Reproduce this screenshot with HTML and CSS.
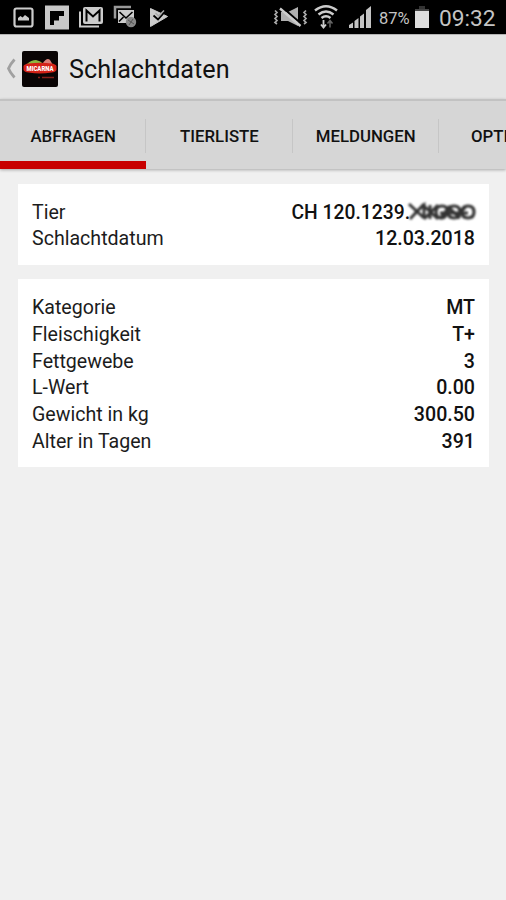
FILE: index.html
```html
<!DOCTYPE html>
<html lang="de">
<head>
    <meta charset="UTF-8">
    <meta name="viewport" content="width=device-width, initial-scale=1.0">
    <title>Schlachtdaten</title>
    <link rel="stylesheet" href="styles.css">
</head>
<body>

<div class="status-bar">
    <svg class="notifications" width="180" height="34" viewBox="0 0 180 34">
        <!-- picture -->
        <rect x="14.5" y="8.5" width="18" height="18" rx="2" fill="none" stroke="#ccc" stroke-width="2.2"/>
        <path d="M18 20.500v-2.500l2.500-2 2 1.500 2.500-2.500 4 3v2.500z" fill="#ccc"/>
        <!-- flipboard -->
        <rect x="45" y="5.500" width="24" height="24" fill="#c8c8c8"/>
        <path d="M50 11h14v5h-5v4.500h-5v4.500h-4z" fill="#000"/>
        <!-- mail -->
        <path d="M80 11.500v15h19" fill="none" stroke="#ccc" stroke-width="2"/>
        <rect x="83" y="7" width="20" height="17" rx="2" fill="#ccc"/>
        <path d="M86.500 21.500v-11l6.500 6 6.500-6v11" fill="none" stroke="#000" stroke-width="2"/>
        <!-- mail blocked -->
        <path d="M115 18.500v-11.500h16" fill="none" stroke="#999" stroke-width="2.500"/>
        <rect x="118" y="10" width="16" height="13" fill="#ccc"/>
        <path d="M119.500 12l6.500 6 6.500-6M119 21.500l4.500-4.500" fill="none" stroke="#000" stroke-width="1.600"/>
        <circle cx="131" cy="22" r="5.200" fill="#888"/>
        <path d="M128 20l6 4M133 19l-4 6" stroke="#555" stroke-width="1"/>
        <!-- play -->
        <path d="M150.500 8.500l17 8-17 10z" fill="#ccc" stroke="#ccc" stroke-linejoin="round"/>
        <path d="M153.500 15.500l4.500 4 8-9" fill="none" stroke="#000" stroke-width="1.800"/>
        <path d="M155.500 13l3 3 5.500-5.500" fill="none" stroke="#aaa" stroke-width="1.500"/>
    </svg>

    <div class="system">
        <svg width="104" height="34" viewBox="272 0 104 34">
            <!-- vibrate / muted -->
            <path d="M276 10.500l2 2-2 2 2 2-2 2 2 2-2 2 2 1.500M307 10.500l-2 2 2 2-2 2 2 2-2 2 2 2-2 1.500" fill="none" stroke="#aaa" stroke-width="1.700"/>
            <path d="M282 12h7l10-5v19l-10-5h-7z" fill="#b0b0b0"/>
            <path d="M283.500 7.500l19 16.500" stroke="#000" stroke-width="2"/>
            <path d="M281 8.500l20.500 17.500" stroke="#ccc" stroke-width="2.400"/>
            <!-- wifi -->
            <path d="M316 10.500q11-8.500 22 0M319.500 14.500q7.500-6 15 0M322.500 18q4.500-3.500 9 0" fill="none" stroke="#ccc" stroke-width="2.500"/>
            <path d="M324.500 20v6M322 24.500l2.500 3 2.500-3" fill="none" stroke="#ccc" stroke-width="1.800"/>
            <path d="M331 27.500v-6M328.500 23.500l2.500-3 2.500 3" fill="none" stroke="#666" stroke-width="1.500"/>
            <!-- signal -->
            <path d="M350 28v-3l4-2.500v5.500zM355.500 28v-7l4-3v10zM361 28v-11.500l4-3v14.500zM367 28v-18l5-4v22z" fill="#c4c4c4"/>
        </svg>
        <span class="percent">87%</span>
        <svg class="battery" width="16" height="34" viewBox="0 0 16 34">
            <path d="M5 6h6v3H5z" fill="#333"/>
            <path d="M1 11V9h14v2" fill="#444"/>
            <rect x="1" y="11" width="14" height="17" fill="#ddd"/>
        </svg>
        <span class="clock">09:32</span>
    </div>
</div>

<header class="action-bar">
    <svg class="back" width="12" height="24" viewBox="0 0 12 24">
        <path d="M10.500 2.500q-4.500 5-6 9 1.500 4 6 9" fill="none" stroke="#a0a0a0" stroke-width="2.800"/>
    </svg>
    <svg class="logo" width="36" height="36" viewBox="0 0 36 36">
        <rect width="36" height="36" rx="2" fill="#0a0505"/>
        <path d="M5 13q4-4 9-4 5 1 7 4z" fill="#8cb840"/>
        <path d="M21 12q4-6 7-3l3 5z" fill="#dc8078"/>
        <path d="M1.500 15q1-2 5-2.500 11.500-1.500 23 0 4 .5 5 2.500v4q-1 2-5 2.500-11.500 2-23 0-4-.5-5-2.500z" fill="#d52318"/>
        <text class="logo-name" x="18" y="20" text-anchor="middle" textLength="27" lengthAdjust="spacingAndGlyphs">MICARNA</text>
        <path d="M16 26.500h2M20 26.500h12" stroke="#84201a" stroke-width="1.500"/>
    </svg>
    <h1>Schlachtdaten</h1>
</header>

<nav class="tabs">
    <a class="tab active">ABFRAGEN</a>
    <a class="tab">TIERLISTE</a>
    <a class="tab">MELDUNGEN</a>
    <a class="tab">OPTIONEN</a>
</nav>

<main class="content">
    <section class="card">
        <div class="row">
            <span>Tier</span>
            <span class="value number">CH 120.1239.<svg class="masked" width="63" height="20" viewBox="0 0 63 20">
                <path d="M-3 1l15 14M12 1L-2 16M3 10l9-8v13M12 3l14 13M26 2L12 16M18 2v14" stroke-width="3"/>
                <path d="M24 9q0-6 6-6t5 6-6 6-5-6M38 3l-10 13M36 9q0-6 6-6t6 6-6 6-6-6M50 9q0-6 6-6t6 6-6 6-6-6M28 10h28M44 15l10-12M36 4l12 11" stroke-width="3.200"/>
            </svg></span>
        </div>
        <div class="row"><span>Schlachtdatum</span><span class="value">12.03.2018</span></div>
    </section>

    <section class="card details">
        <div class="row"><span>Kategorie</span><span class="value">MT</span></div>
        <div class="row"><span>Fleischigkeit</span><span class="value">T+</span></div>
        <div class="row"><span>Fettgewebe</span><span class="value">3</span></div>
        <div class="row"><span>L-Wert</span><span class="value">0.00</span></div>
        <div class="row"><span>Gewicht in kg</span><span class="value">300.50</span></div>
        <div class="row"><span>Alter in Tagen</span><span class="value">391</span></div>
    </section>
</main>

</body>
</html>
```

FILE: styles.css
```css
* {
    box-sizing: border-box;
}

body {
    font-family: Roboto, sans-serif;
    margin: 0;
    min-height: 900px;
    background: #f0f0f0;
    color: #1c1c1c;
    overflow: hidden;
}

svg {
    display: block;
    flex-shrink: 0;
}

.status-bar {
    display: flex;
    justify-content: space-between;
    height: 34px;
    background: #000;
    color: #c4c4c4;
}

.system {
    display: flex;
    align-items: center;
    padding-right: 11px;
}

.percent {
    width: 35px;
    margin-left: 4px;
    font-size: 16.5px;
    padding-top: 3px;
}

.clock {
    width: 56px;
    margin-left: 9px;
    font-size: 22.7px;
    padding-top: 3px;
    white-space: nowrap;
}

.action-bar {
    display: flex;
    align-items: center;
    height: 65px;
    padding: 3px 0 0 4px;
    background: #e4e4e4;
    border-top: 1px solid #b4b4b4;
}

.logo {
    margin-left: 6px;
}

.logo-name {
    font-size: 7.5px;
    font-weight: 900;
    fill: #fff;
}

h1 {
    margin: 0 0 0 11px;
    padding-top: 2px;
    font-size: 25.2px;
    font-weight: 400;
    color: #111;
}

.tabs {
    display: flex;
    height: 70px;
    background: #d6d6d6;
    border-top: 2px solid #c2c2c2;
    box-shadow: 0 1px 3px rgba(0, 0, 0, 0.3);
    overflow-x: clip;
}

.tab {
    display: flex;
    align-items: center;
    justify-content: center;
    flex: 0 0 146.3px;
    padding-top: 2px;
    font-size: 16.8px;
    font-weight: 500;
    color: #111;
    background: linear-gradient(#c6c6c6, #c6c6c6) right 18px / 1px 34px no-repeat;
}

.active {
    padding-top: 10px;
    border-bottom: 8px solid #c80000;
}

.content {
    display: flex;
    flex-direction: column;
    gap: 14px;
    padding: 15px 17px 0 18px;
}

.card {
    padding: 14.5px 14px 13px;
    background: #fff;
}

.details {
    padding: 15.5px 14px 12px;
}

.row {
    display: flex;
    justify-content: space-between;
    height: 26.7px;
    line-height: 28px;
    font-size: 19.6px;
}

.value {
    font-weight: 500;
    color: #111;
}

.number {
    display: flex;
    font-size: 19.3px;
}

.masked {
    margin: 4px 0 0 2px;
    fill: none;
    stroke: #333;
    filter: blur(1.2px);
    overflow: visible;
}
```
